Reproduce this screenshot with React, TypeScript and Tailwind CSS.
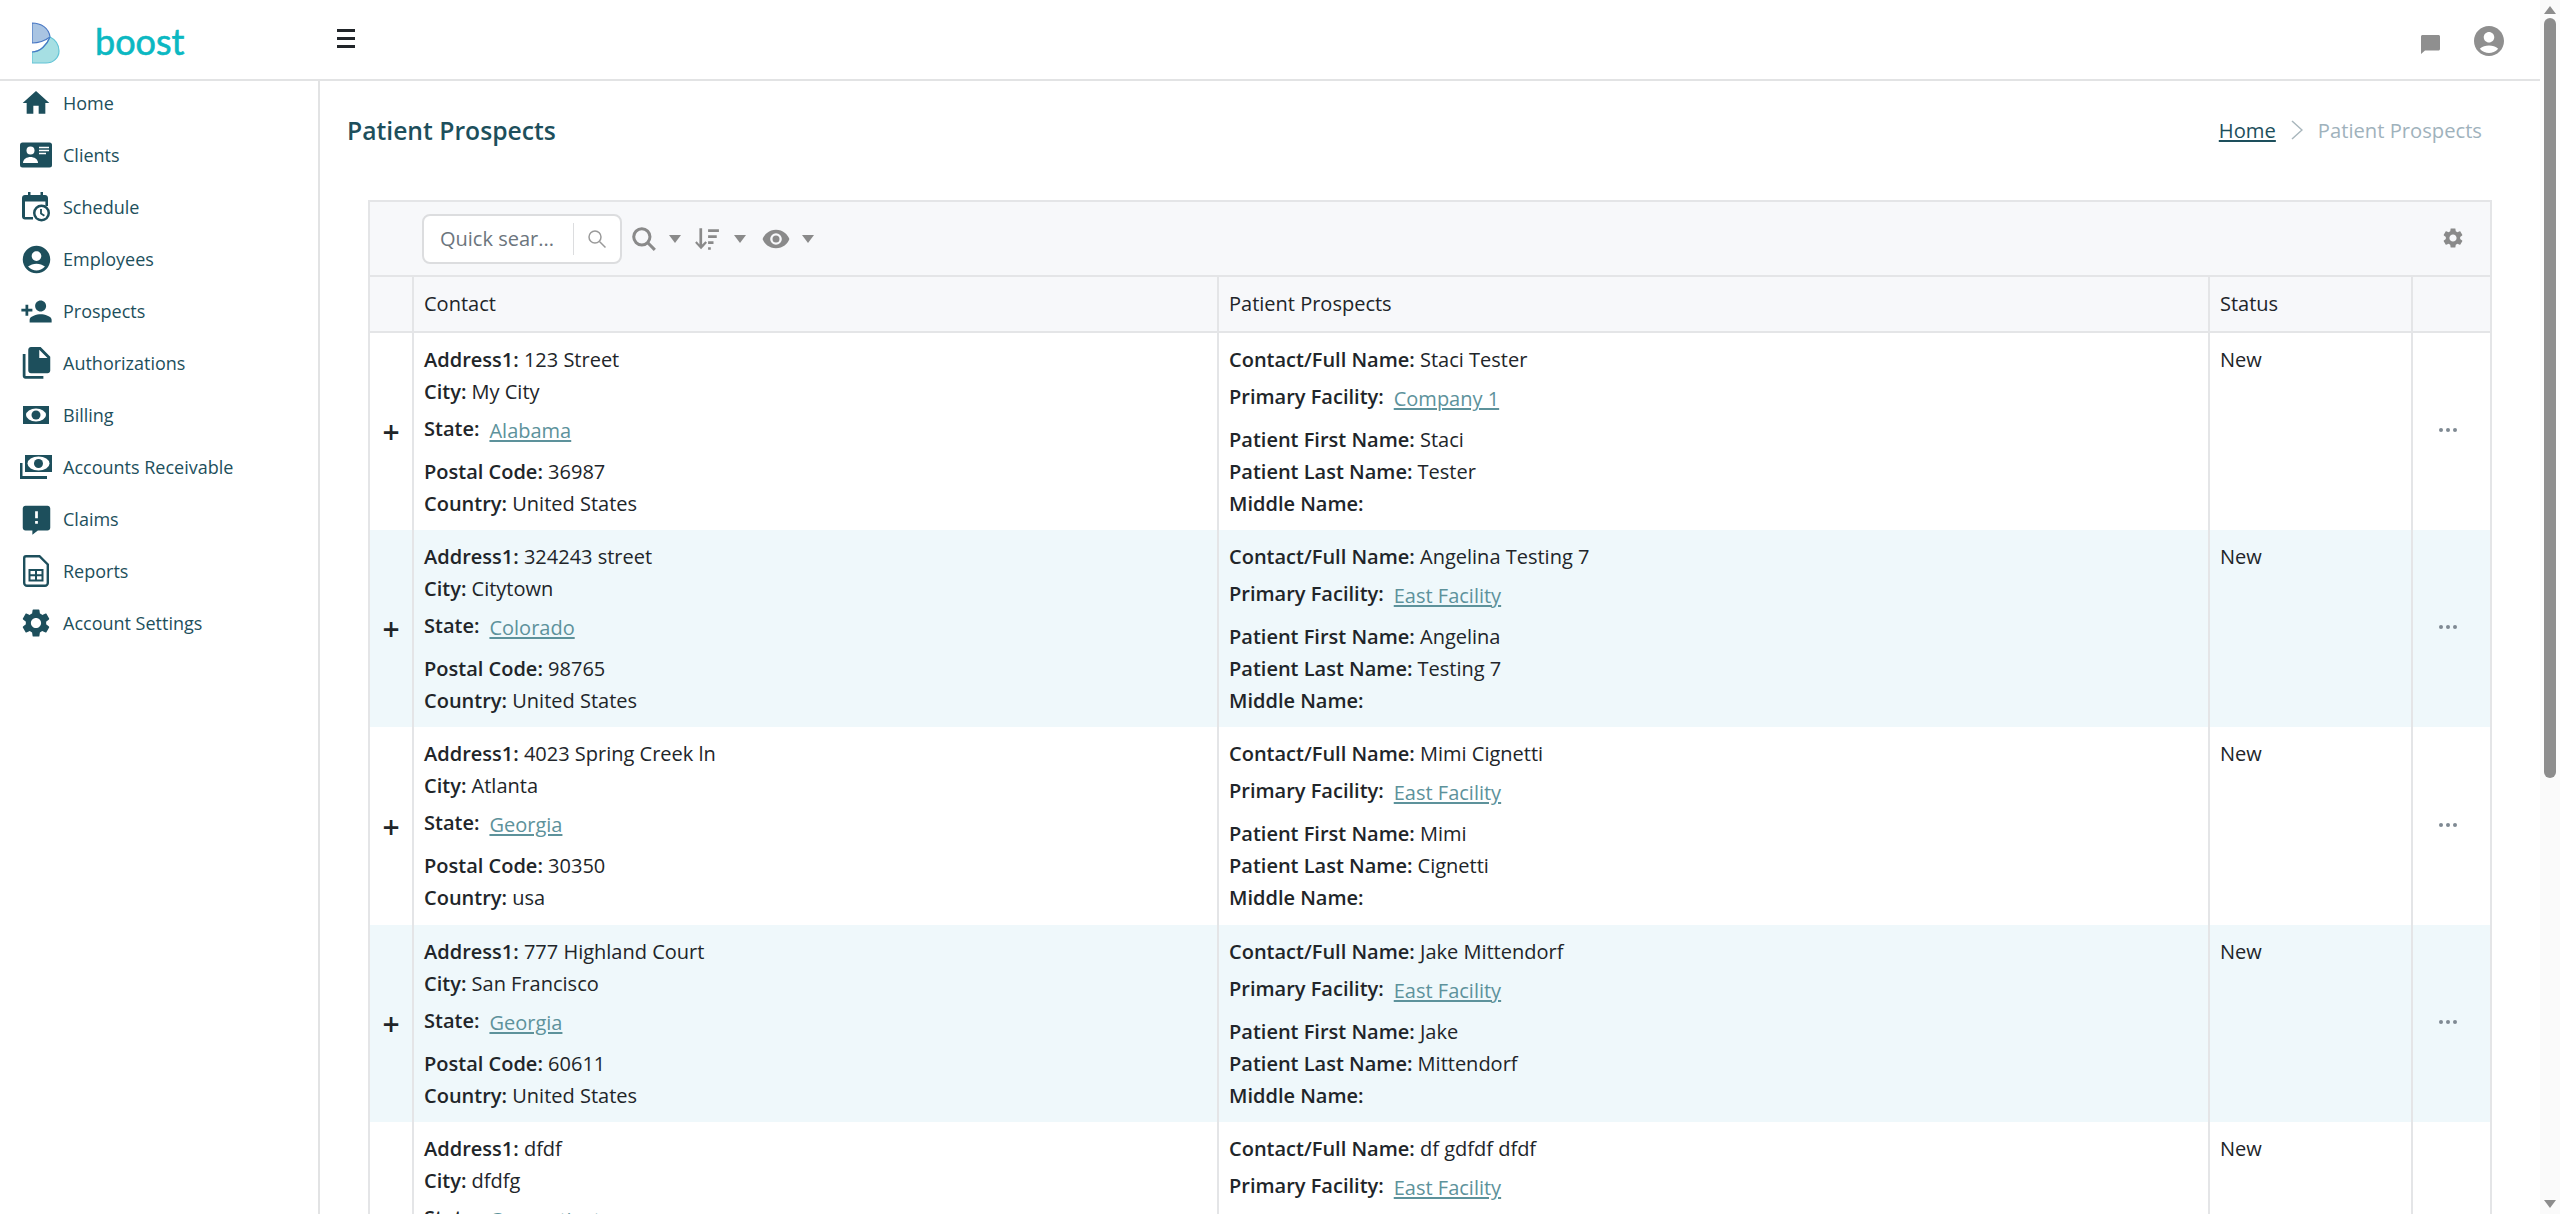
import type { ReactNode } from "react";

const FONT = "font-['Open_Sans','Noto_Sans',sans-serif]";

// Material-style filled icons used in the sidebar
const ICON_PATHS = {
  home: "M10 20v-6h4v6h5v-8h3L12 3 2 12h3v8z",
  employee:
    "M12 2C6.48 2 2 6.48 2 12s4.48 10 10 10 10-4.48 10-10S17.52 2 12 2zm0 4c1.93 0 3.5 1.57 3.5 3.5S13.93 13 12 13s-3.5-1.57-3.5-3.5S10.07 6 12 6zm0 14c-2.03 0-4.43-.82-6.14-2.88C7.55 15.8 9.68 15 12 15s4.45.8 6.14 2.12C16.43 19.18 14.03 20 12 20z",
  personAdd:
    "M15 12c2.21 0 4-1.79 4-4s-1.79-4-4-4-4 1.79-4 4 1.79 4 4 4zm-9-2V7H4v3H1v2h3v3h2v-3h3v-2H6zm9 4c-2.67 0-8 1.34-8 4v2h16v-2c0-2.66-5.33-4-8-4z",
  fileCopy:
    "M4 5H2v16c0 1.1.9 2 2 2h13v-2H4V5zm11-5H8C6.9 0 6 .9 6 2v15c0 1.1.9 2 2 2h12c1.1 0 2-.9 2-2V7l-7-7zm-1 8V2l6 6h-6z",
  claim:
    "M20 2H4c-1.1 0-2 .9-2 2v14c0 1.1.9 2 2 2h5v3l4-3h7c1.1 0 2-.9 2-2V4c0-1.1-.9-2-2-2zm-7 13h-2v-2h2v2zm0-4h-2V6h2v5z",
  gear:
    "M19.14 12.94c.04-.3.06-.61.06-.94 0-.32-.02-.64-.07-.94l2.03-1.58c.18-.14.23-.41.12-.61l-1.92-3.32c-.12-.22-.37-.29-.59-.22l-2.39.96c-.5-.38-1.03-.7-1.62-.94l-.36-2.54c-.04-.24-.24-.41-.48-.41h-3.84c-.24 0-.43.17-.47.41l-.36 2.54c-.59.24-1.13.57-1.62.94l-2.39-.96c-.22-.08-.47 0-.59.22L2.74 8.87c-.12.21-.08.47.12.61l2.03 1.58c-.05.3-.09.63-.09.94s.02.64.07.94l-2.03 1.58c-.18.14-.23.41-.12.61l1.92 3.32c.12.22.37.29.59.22l2.39-.96c.5.38 1.03.7 1.62.94l.36 2.54c.05.24.24.41.48.41h3.84c.24 0 .44-.17.47-.41l.36-2.54c.59-.24 1.13-.56 1.62-.94l2.39.96c.22.08.47 0 .59-.22l1.92-3.32c.12-.22.07-.47-.12-.61l-2.01-1.58zM12 15.6c-1.98 0-3.6-1.62-3.6-3.6s1.62-3.6 3.6-3.6 3.6 1.62 3.6 3.6-1.62 3.6-3.6 3.6z",
};

function Icon({ d, className }: { d: string; className: string }) {
  return (
    <svg viewBox="0 0 24 24" fill="currentColor" className={className}>
      <path d={d} />
    </svg>
  );
}

function ClientsIcon() {
  return (
    <svg viewBox="0 0 32 26" className="w-[32px] h-[26px]">
      <rect width="32" height="25" y="0.5" rx="2.5" fill="#1d4f5c" />
      <circle cx="10.5" cy="8.5" r="4" fill="#fff" />
      <path d="M3 21c0-4 4-6 7.5-6s7.5 2 7.5 6z" fill="#fff" />
      <path d="M19 5.5h10M19 8.5h10M19 11.5h7" stroke="#fff" strokeWidth="1.4" />
    </svg>
  );
}

function ScheduleIcon() {
  return (
    <svg viewBox="0 0 28 30" className="w-[28px] h-[30px]">
      <path
        d="M6 0h2.500v3h10V0H21v3h2c1.700 0 3 1.300 3 3v8h-2.600V9.500H3V25h8v2.500H3c-1.700 0-3-1.300-3-3V6c0-1.700 1.300-3 3-3h3z"
        fill="#1d4f5c"
      />
      <circle cx="19.5" cy="21" r="8.5" fill="#1d4f5c" />
      <circle cx="19.5" cy="21" r="6" fill="#fff" />
      <path d="M19 17v4.600l3.400 2.200" stroke="#1d4f5c" strokeWidth="1.8" fill="none" />
    </svg>
  );
}

function BillingIcon({ stacked }: { stacked?: boolean }) {
  if (stacked) {
    return (
      <svg viewBox="0 0 32 24" className="w-[32px] h-[24px]">
        <path d="M0 8h2.500v13H27v3H0z" fill="#1d4f5c" />
        <path d="M5 0h27v17H5z" fill="#1d4f5c" />
        <ellipse cx="18.500" cy="8.500" rx="11" ry="7" fill="#fff" />
        <circle cx="18.500" cy="8.500" r="4.500" fill="#1d4f5c" />
      </svg>
    );
  }
  return (
    <svg viewBox="0 0 26 18" className="w-[26px] h-[18px]">
      <path d="M0 0h26v18H0z" fill="#1d4f5c" />
      <ellipse cx="13" cy="9" rx="10" ry="6.500" fill="#fff" />
      <circle cx="13" cy="9" r="4.500" fill="#1d4f5c" />
    </svg>
  );
}

function ReportsIcon() {
  return (
    <svg viewBox="0 0 26 32" className="w-[26px] h-[32px]">
      <path
        d="M3 1.200h13.500L24.800 9.500V28c0 1.500-1.300 2.800-2.800 2.800H4c-1.500 0-2.800-1.300-2.800-2.800V3c0-1 .8-1.800 1.800-1.800z"
        fill="none"
        stroke="#1d4f5c"
        strokeWidth="2.400"
      />
      <path d="M6.500 15h13v10.500h-13z" fill="none" stroke="#1d4f5c" strokeWidth="2" />
      <path d="M13 15v10.500M6.500 20.200h13" stroke="#1d4f5c" strokeWidth="2" />
    </svg>
  );
}

const navItems: { label: string; icon: ReactNode }[] = [
  { label: "Home", icon: <Icon d={ICON_PATHS.home} className="w-[32px] h-[32px]" /> },
  { label: "Clients", icon: <ClientsIcon /> },
  { label: "Schedule", icon: <ScheduleIcon /> },
  { label: "Employees", icon: <Icon d={ICON_PATHS.employee} className="w-[33px] h-[33px]" /> },
  { label: "Prospects", icon: <Icon d={ICON_PATHS.personAdd} className="w-[33px] h-[33px]" /> },
  { label: "Authorizations", icon: <Icon d={ICON_PATHS.fileCopy} className="w-[33px] h-[33px]" /> },
  { label: "Billing", icon: <BillingIcon /> },
  { label: "Accounts Receivable", icon: <BillingIcon stacked /> },
  { label: "Claims", icon: <Icon d={ICON_PATHS.claim} className="w-[33px] h-[33px]" /> },
  { label: "Reports", icon: <ReportsIcon /> },
  { label: "Account Settings", icon: <Icon d={ICON_PATHS.gear} className="w-[34px] h-[34px]" /> },
];

const prospects = [
  {
    address: "123 Street",
    city: "My City",
    state: "Alabama",
    postal: "36987",
    country: "United States",
    name: "Staci Tester",
    facility: "Company 1",
    first: "Staci",
    last: "Tester",
  },
  {
    address: "324243 street",
    city: "Citytown",
    state: "Colorado",
    postal: "98765",
    country: "United States",
    name: "Angelina Testing 7",
    facility: "East Facility",
    first: "Angelina",
    last: "Testing 7",
  },
  {
    address: "4023 Spring Creek ln",
    city: "Atlanta",
    state: "Georgia",
    postal: "30350",
    country: "usa",
    name: "Mimi Cignetti",
    facility: "East Facility",
    first: "Mimi",
    last: "Cignetti",
  },
  {
    address: "777 Highland Court",
    city: "San Francisco",
    state: "Georgia",
    postal: "60611",
    country: "United States",
    name: "Jake Mittendorf",
    facility: "East Facility",
    first: "Jake",
    last: "Mittendorf",
  },
  {
    address: "dfdf",
    city: "dfdfg",
    state: "Connecticut",
    postal: "",
    country: "",
    name: "df gdfdf dfdf",
    facility: "East Facility",
    first: "",
    last: "",
  },
];

function Line({ label, value }: { label: string; value: string }) {
  return (
    <div className="h-[32px] leading-[32px] whitespace-nowrap">
      <span className="font-semibold">{label}:</span> {value}
    </div>
  );
}

function LinkLine({ label, value }: { label: string; value: string }) {
  return (
    <div className="flex h-[42px] pt-[5px] mb-[6px] whitespace-nowrap">
      <span className="font-semibold leading-[32px]">{label}:</span>
      <a className="ml-[10px] mt-[2px] leading-[32px] text-[#5d929b] underline underline-offset-2">{value}</a>
    </div>
  );
}

function Caret() {
  return <div className="w-0 h-0 border-x-[6px] border-x-transparent border-t-[8px] border-t-[#8a8a8a]" />;
}

function Logo() {
  return (
    <svg viewBox="0 0 28 43" className="w-[28px] h-[43px] mt-[4px]">
      <path d="M0 1C9 1 17 6 18 15 14 18 7 21 0 21z" fill="#a9c4e2" stroke="#4a78c4" strokeWidth="1.200" />
      <path d="M0 30C8 30 15 23 18 15 24 18 27 23 27 29 27 36 21 41 14 41H0z" fill="#a6dfe3" stroke="#62c4d6" strokeWidth="1.200" />
      <path d="M0 30C8 30 15 23 18 15" fill="none" stroke="#4a78c4" strokeWidth="1.200" />
    </svg>
  );
}

export default function App() {
  return (
    <div className={`${FONT} flex h-[1214px] w-[2560px] overflow-hidden bg-white text-[20px] text-[#212529]`}>
      <div className="flex flex-col w-[2540px]">
        {/* Top bar */}
        <header className="flex items-center h-[81px] shrink-0 border-b-2 border-[#e2e3e4]">
          <div className="flex items-center w-[320px] pl-[32px] pt-[3px]">
            <Logo />
            <span className="ml-[35px] font-['Lato',sans-serif] text-[36px] leading-none text-[#0bb8c2] [-webkit-text-stroke:0.6px_#0bb8c2]">boost</span>
          </div>
          <div className="flex flex-col gap-[5px] ml-[17px] w-[18px] mb-[2px]">
            <div className="h-[3px] bg-[#212529]" />
            <div className="h-[3px] bg-[#212529]" />
            <div className="h-[3px] bg-[#212529]" />
          </div>
          <div className="ml-auto flex items-center gap-[31px] pr-[33px] pt-[3px] text-[#8f8f8f]">
            <svg viewBox="0 0 19 19" fill="currentColor" className="w-[19px] h-[19px] mt-[6px]">
              <path d="M1.500 0h16c.8 0 1.500.7 1.500 1.500V14c0 .8-.7 1.500-1.500 1.500H4L0 19V1.500C0 .7.700 0 1.500 0z" />
            </svg>
            <Icon d={ICON_PATHS.employee} className="w-[36px] h-[36px]" />
          </div>
        </header>

        <div className="flex flex-1 min-h-0">
          {/* Sidebar */}
          <nav className="flex flex-col gap-[8px] w-[320px] shrink-0 border-r-2 border-[#e2e3e4] text-[#1d4f5c]">
            {navItems.map((item) => (
              <div key={item.label} className="flex items-center h-[44px]">
                <div className="flex justify-center w-[72px] shrink-0">{item.icon}</div>
                <span className="-ml-[9px] text-[18px]">{item.label}</span>
              </div>
            ))}
          </nav>

          {/* Page body */}
          <main className="flex-1 min-w-0">
            <div className="flex items-center justify-between h-[99px] pl-[27px] pr-[58px]">
              <h1 className="text-[24.700px] font-semibold text-[#1d4f5c]">Patient Prospects</h1>
              <div className="flex items-center text-[20.200px]">
                <a className="underline underline-offset-2 text-[#1d4f5c]">Home</a>
                <svg viewBox="0 0 12 20" className="w-[12px] h-[20px] mx-[15px]" fill="none" stroke="#a9b7bd" strokeWidth="1.500">
                  <path d="M1 1l10 9-10 9" />
                </svg>
                <span className="text-[#9fb2bc]">Patient Prospects</span>
              </div>
            </div>

            <div className="ml-[48px] mt-[20px] w-[2124px] border-l-2 border-r-2 border-t-2 border-[#e4e5e7]">
              {/* Toolbar */}
              <div className="flex items-center h-[75px] bg-[#f7f8fa] pl-[52px] pr-[25px] text-[#8a8a8a] border-b-2 border-[#e4e5e7]">
                <div className="flex items-center w-[200px] h-[50px] rounded-[8px] border-2 border-[#dcdddf] bg-white pl-[16px] text-[#6c757d]">
                  <span className="w-[133px] whitespace-nowrap">Quick sear...</span>
                  <div className="h-[32px] w-px bg-[#dcdddf]" />
                  <svg viewBox="0 0 20 20" fill="none" stroke="#9a9a9a" strokeWidth="1.500" className="w-[20px] h-[20px] ml-[13px]">
                    <circle cx="8" cy="8" r="6" />
                    <path d="M12.500 12.500l6 6" />
                  </svg>
                </div>
                <svg viewBox="0 0 24 24" fill="none" stroke="currentColor" strokeWidth="2.800" className="w-[26px] h-[26px] ml-[9px]">
                  <circle cx="10" cy="10" r="7.500" />
                  <path d="M15.500 15.500l6.500 6.500" />
                </svg>
                <div className="ml-[12px]"><Caret /></div>
                <svg viewBox="0 0 24 24" fill="currentColor" className="w-[26px] h-[26px] ml-[13px]">
                  <path d="M5 2h2.500v15l3-3 1.500 1.500-5.500 6-5.500-6L2.500 14l2.500 3zM13 3h10v2.500H13zM13 8.500h8V11h-8zM13 14h5v2.500h-5zM13 19.500h2.500V22H13z" />
                </svg>
                <div className="ml-[14px]"><Caret /></div>
                <svg viewBox="0 0 24 24" fill="currentColor" className="w-[28px] h-[28px] ml-[16px]">
                  <path d="M12 4C6 4 2 8 0.500 12 2 16 6 20 12 20s10-4 11.500-8C22 8 18 4 12 4zm0 13a5 5 0 1 1 0-10 5 5 0 0 1 0 10zm0-8a3 3 0 1 0 0 6 3 3 0 0 0 0-6z" />
                </svg>
                <div className="ml-[12px]"><Caret /></div>
                <Icon d={ICON_PATHS.gear} className="w-[24px] h-[24px] ml-auto mb-[2px]" />
              </div>

              <table className="w-full table-fixed border-collapse">
                <colgroup>
                  <col className="w-[43px]" />
                  <col className="w-[805px]" />
                  <col className="w-[991px]" />
                  <col className="w-[203px]" />
                  <col className="w-[78px]" />
                </colgroup>
                <thead>
                  <tr className="h-[55px] bg-[#f7f8fa] border-b-2 border-[#e4e5e7] text-left">
                    <th className="border-r-2 border-[#e4e5e7]" />
                    <th className="border-r-2 border-[#e4e5e7] pl-[10px] font-normal">Contact</th>
                    <th className="border-r-2 border-[#e4e5e7] pl-[10px] font-normal">Patient Prospects</th>
                    <th className="border-r-2 border-[#e4e5e7] pl-[10px] font-normal">Status</th>
                    <th />
                  </tr>
                </thead>
                <tbody>
                  {prospects.map((p, i) => (
                    <tr key={p.name} className={i % 2 === 1 ? "h-[197.500px] bg-[#eff8fb]" : "h-[197.500px] bg-white"}>
                      <td className="border-r-2 border-[#e4e5e7] text-center align-middle">
                        <span className="block pt-[2px] text-[30px] leading-none font-semibold">+</span>
                      </td>
                      <td className="border-r-2 border-[#e4e5e7] align-top pl-[10px] pt-[11px]">
                        <Line label="Address1" value={p.address} />
                        <Line label="City" value={p.city} />
                        <LinkLine label="State" value={p.state} />
                        <Line label="Postal Code" value={p.postal} />
                        <Line label="Country" value={p.country} />
                      </td>
                      <td className="border-r-2 border-[#e4e5e7] align-top pl-[10px] pt-[11px]">
                        <Line label="Contact/Full Name" value={p.name} />
                        <LinkLine label="Primary Facility" value={p.facility} />
                        <Line label="Patient First Name" value={p.first} />
                        <Line label="Patient Last Name" value={p.last} />
                        <Line label="Middle Name" value="" />
                      </td>
                      <td className="border-r-2 border-[#e4e5e7] align-top pl-[10px] pt-[11px]">
                        <div className="h-[32px] leading-[32px]">New</div>
                      </td>
                      <td className="align-middle">
                        <div className="flex justify-center gap-[3px] pr-[8px] pb-[2px]">
                          <div className="w-[4px] h-[4px] rounded-full bg-[#7f8a93]" />
                          <div className="w-[4px] h-[4px] rounded-full bg-[#7f8a93]" />
                          <div className="w-[4px] h-[4px] rounded-full bg-[#7f8a93]" />
                        </div>
                      </td>
                    </tr>
                  ))}
                </tbody>
              </table>
            </div>
          </main>
        </div>
      </div>

      {/* Window scrollbar */}
      <div className="flex flex-col items-center justify-between w-[20px] shrink-0 bg-[#fafafa] py-[6px]">
        <div className="w-0 h-0 border-x-[6px] border-x-transparent border-b-[8px] border-b-[#8c8c8c]" />
        <div className="w-[12px] h-[760px] mt-[4px] mb-auto rounded-full bg-[#8c8c8c]" />
        <div className="w-0 h-0 border-x-[6px] border-x-transparent border-t-[8px] border-t-[#8c8c8c]" />
      </div>
    </div>
  );
}
